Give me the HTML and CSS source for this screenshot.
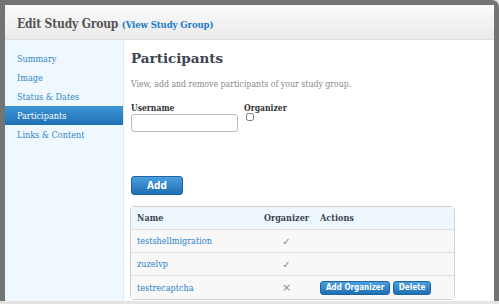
FILE: index.html
```html
<!DOCTYPE html>
<html lang="en">
<head>
  <meta charset="UTF-8" />
  <title>Edit Study Group</title>
  <link rel="stylesheet" href="styles.css">
</head>
<body>
  <div class="dialog">
    <!-- Header -->
    <div class="dialog-head">
      <h1>Edit Study Group <a href="#">(View Study Group)</a></h1>
    </div>

    <div class="dialog-body">
      <!-- Side menu -->
      <ul class="side-nav">
        <li><a href="#">Summary</a></li>
        <li><a href="#">Image</a></li>
        <li><a href="#">Status &amp; Dates</a></li>
        <li class="active"><a href="#">Participants</a></li>
        <li><a href="#">Links &amp; Content</a></li>
      </ul>

      <!-- Main panel -->
      <div class="panel">
        <h2>Participants</h2>
        <p class="intro">View, add and remove participants of your study group.</p>

        <div class="add-form">
          <div class="field">
            <label>Username</label>
            <input type="text" class="text-input" />
          </div>
          <div class="field">
            <label>Organizer</label>
            <input type="checkbox" class="check" />
          </div>
        </div>

        <button class="btn btn-add">Add</button>

        <table class="people">
          <thead>
            <tr>
              <th class="col-name">Name</th>
              <th class="col-org">Organizer</th>
              <th class="col-act">Actions</th>
            </tr>
          </thead>
          <tbody>
            <tr>
              <td><a href="#">testshellmigration</a></td>
              <td class="mark">&#10003;</td>
              <td></td>
            </tr>
            <tr>
              <td><a href="#">zuzelvp</a></td>
              <td class="mark">&#10003;</td>
              <td></td>
            </tr>
            <tr>
              <td><a href="#">testrecaptcha</a></td>
              <td class="mark cross">&#215;</td>
              <td class="actions">
                <button class="btn btn-small">Add Organizer</button>
                <button class="btn btn-small">Delete</button>
              </td>
            </tr>
          </tbody>
        </table>
      </div>
    </div>
  </div>
</body>
</html>
```

FILE: styles.css
```css
* {
  box-sizing: border-box;
  margin: 0;
  padding: 0;
}
body {
  font-family: "DejaVu Serif Condensed", "DejaVu Serif", serif;
  background: #e4e4e4;
  height: 304px;
  overflow: hidden;
}
a {
  color: #2a82c8;
  text-decoration: none;
}
.dialog {
  width: 499px;
  height: 301px;
  border: 5px solid #747474;
  border-bottom: none;
  border-top-right-radius: 7px;
  background: #fff;
  display: flex;
  flex-direction: column;
}
.dialog-head {
  flex-shrink: 0;
  height: 35px;
  padding: 4px 12px 0;
  display: flex;
  align-items: center;
  background: linear-gradient(#fafafa, #ebebeb);
  border-bottom: 1px solid #e0e0e0;
}
.dialog-head h1 {
  font-size: 12px;
  font-weight: bold;
  color: #555;
  letter-spacing: -0.2px;
}
.dialog-head h1 a {
  font-size: 9.5px;
  letter-spacing: -0.1px;
  color: #1b7cc8;
}
.dialog-body {
  flex: 1;
  min-height: 0;
  overflow: hidden;
  display: flex;
}
.side-nav {
  list-style: none;
  width: 119px;
  background: #f0f8ff;
  border-right: 1px solid #e3e8ec;
  padding-top: 9px;
}
.side-nav li {
  height: 19px;
  display: flex;
  align-items: center;
  padding-left: 12px;
  font-size: 9px;
}
.side-nav li a {
  color: #2f86c6;
}
.side-nav li.active {
  background: linear-gradient(#3d95d6, #1f70b6);
}
.side-nav li.active a {
  color: #fff;
}
.panel {
  flex: 1;
  padding: 10px 38px 0 7px;
  color: #444;
}
.panel h2 {
  font-family: "DejaVu Serif", serif;
  font-size: 13.5px;
  font-weight: bold;
  color: #3c4450;
  height: 16px;
  line-height: 16px;
}
.intro {
  margin-top: 12px;
  font-size: 8.7px;
  color: #8a8a8a;
  height: 12px;
  line-height: 12px;
}
.add-form {
  display: flex;
  gap: 6px;
  margin-top: 13px;
}
.field label {
  display: block;
  font-size: 8.5px;
  font-weight: bold;
  color: #333;
  height: 11px;
  line-height: 11px;
}
.text-input {
  display: block;
  width: 107px;
  height: 18px;
  border: 1px solid #bbb;
  border-radius: 3px;
  background: #fff;
}
.check {
  display: block;
  width: 8px;
  height: 8px;
  margin: -1px 0 0 2px;
}
.btn {
  font-family: "DejaVu Sans Condensed", "DejaVu Sans", sans-serif;
  font-weight: bold;
  color: #fff;
  border: 1px solid #1e64a0;
  border-radius: 3px;
  background: linear-gradient(#4a9fe0, #1f6eb3);
  cursor: pointer;
}
.btn-add {
  display: block;
  width: 52px;
  height: 19px;
  margin-top: 44px;
  font-size: 10px;
}
.people {
  margin-top: 11px;
  margin-left: -1px;
  width: 325px;
  border-collapse: separate;
  border-spacing: 0;
  border: 1px solid #d0d0d0;
  border-radius: 4px;
  font-size: 9px;
}
.people th {
  height: 23px;
  text-align: left;
  background: #eef7fd;
  color: #3c4450;
  font-weight: bold;
  border-bottom: 1px solid #e0e0e0;
}
.people td {
  height: 23px;
  background: #f8f8f8;
  border-bottom: 1px solid #e0e0e0;
}
.people tr:last-child td {
  border-bottom: none;
}
.col-name {
  padding-left: 6px;
  width: 127px;
}
.people td:first-child {
  padding-left: 6px;
}
.people th.col-org {
  width: 57px;
  text-align: center;
}
.col-act {
  padding-left: 5px;
}
.mark {
  text-align: center;
  color: #888;
  font-family: "DejaVu Sans", sans-serif;
  font-size: 10px;
}
.cross {
  font-size: 11px;
}
.actions {
  padding-left: 5px;
}
.btn-small {
  height: 14px;
  font-size: 8px;
  padding: 0 5px;
}
```
